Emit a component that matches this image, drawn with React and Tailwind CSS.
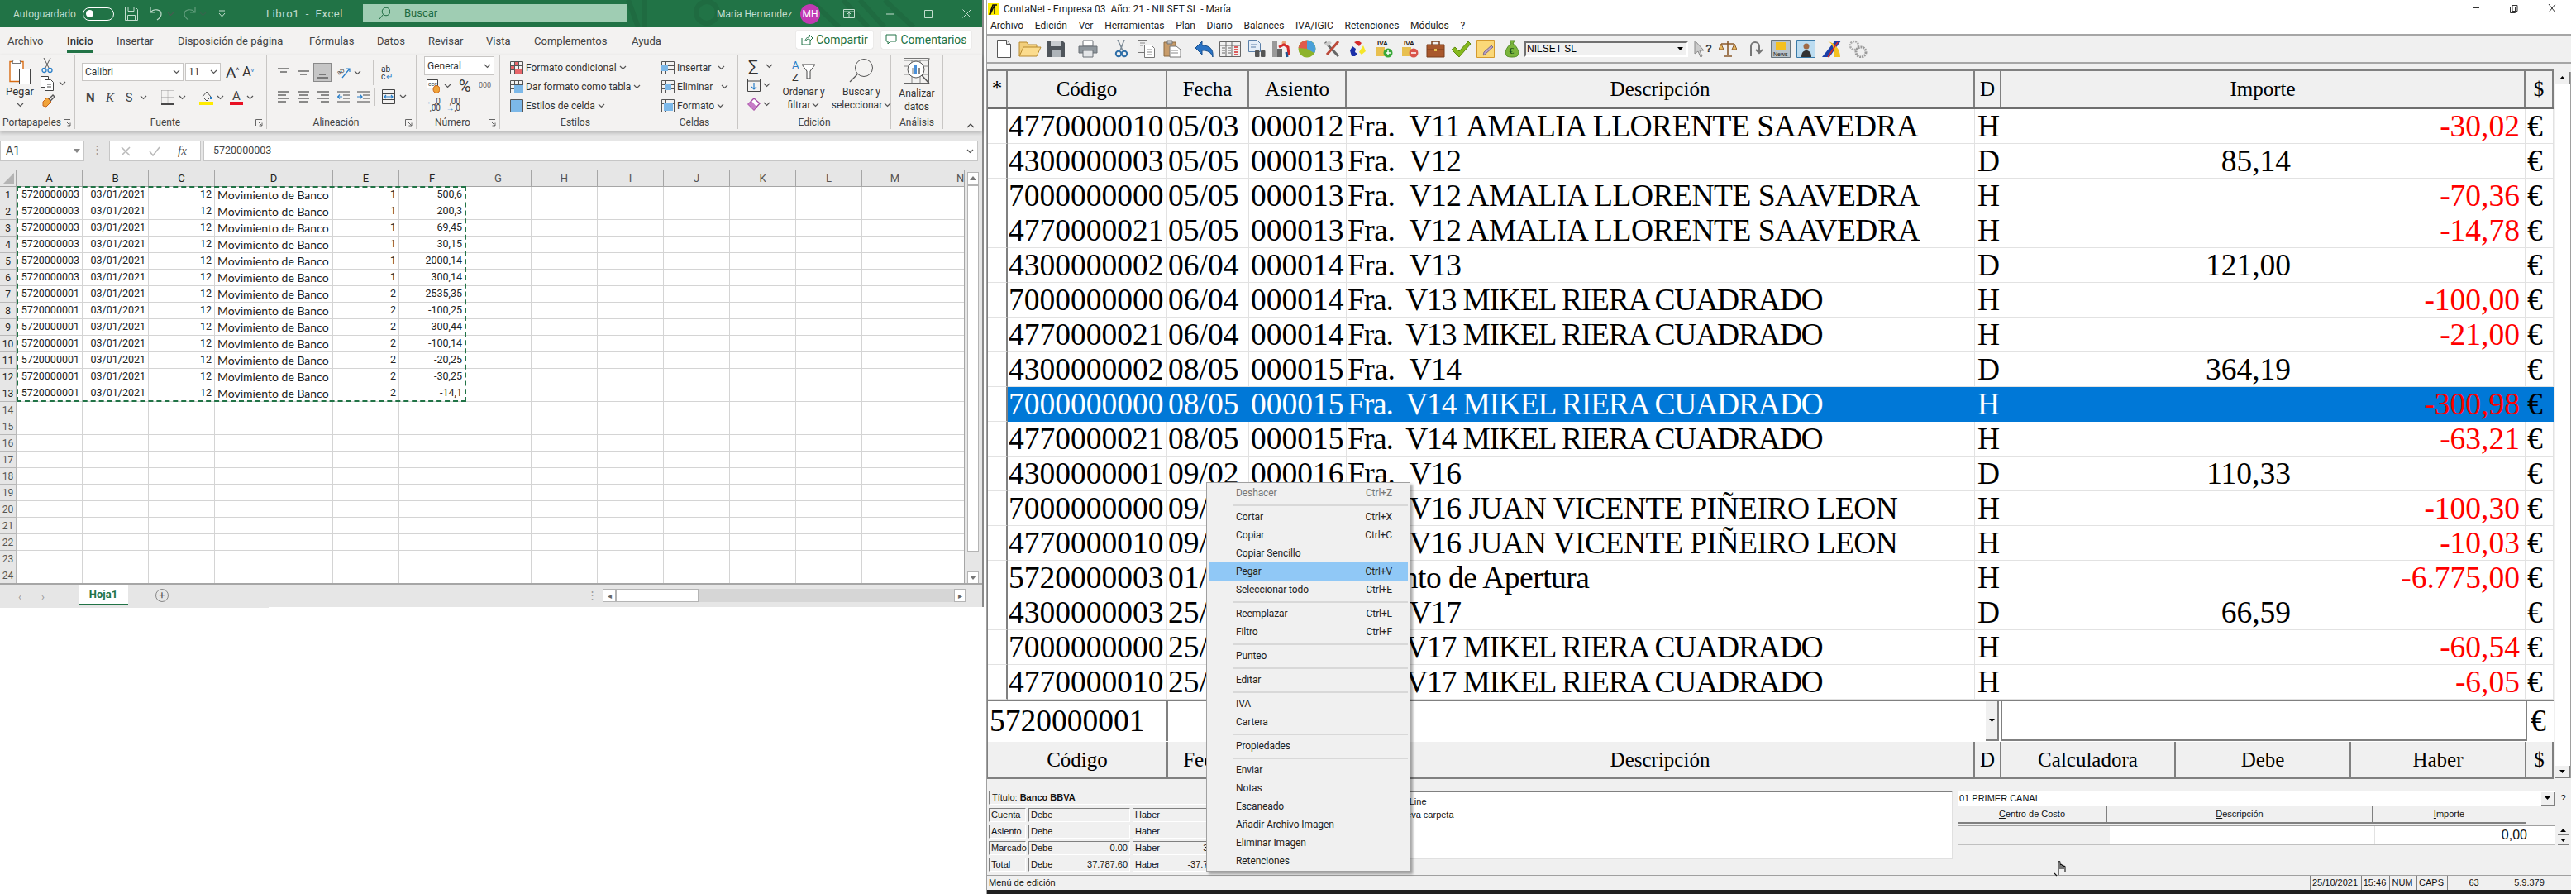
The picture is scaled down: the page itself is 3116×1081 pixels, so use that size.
// App.jsx
import React from "react";

const rows = [
  ["4770000010", "05/03", "000012", "Fra.  V11 AMALIA LLORENTE SAAVEDRA", "H", "-30,02"],
  ["4300000003", "05/05", "000013", "Fra.  V12", "D", "85,14"],
  ["7000000000", "05/05", "000013", "Fra.  V12 AMALIA LLORENTE SAAVEDRA", "H", "-70,36"],
  ["4770000021", "05/05", "000013", "Fra.  V12 AMALIA LLORENTE SAAVEDRA", "H", "-14,78"],
  ["4300000002", "06/04", "000014", "Fra.  V13", "D", "121,00"],
  ["7000000000", "06/04", "000014", "Fra.  V13 MIKEL RIERA CUADRADO", "H", "-100,00"],
  ["4770000021", "06/04", "000014", "Fra.  V13 MIKEL RIERA CUADRADO", "H", "-21,00"],
  ["4300000002", "08/05", "000015", "Fra.  V14", "D", "364,19"],
  ["7000000000", "08/05", "000015", "Fra.  V14 MIKEL RIERA CUADRADO", "H", "-300,98", true],
  ["4770000021", "08/05", "000015", "Fra.  V14 MIKEL RIERA CUADRADO", "H", "-63,21"],
  ["4300000001", "09/02", "000016", "Fra.  V16", "D", "110,33"],
  ["7000000000", "09/02", "000016", "Fra.  V16 JUAN VICENTE PIÑEIRO LEON", "H", "-100,30"],
  ["4770000010", "09/02", "000016", "Fra.  V16 JUAN VICENTE PIÑEIRO LEON", "H", "-10,03"],
  ["5720000003", "01/01", "000001", "Asiento de Apertura", "H", "-6.775,00"],
  ["4300000003", "25/03", "000017", "Fra.  V17", "D", "66,59"],
  ["7000000000", "25/03", "000017", "Fra.  V17 MIKEL RIERA CUADRADO", "H", "-60,54"],
  ["4770000010", "25/03", "000017", "Fra.  V17 MIKEL RIERA CUADRADO", "H", "-6,05"],
];

const sheet = [
  ["5720000003", "500,6", 1],
  ["5720000003", "200,3", 1],
  ["5720000003", "69,45", 1],
  ["5720000003", "30,15", 1],
  ["5720000003", "2000,14", 1],
  ["5720000003", "300,14", 1],
  ["5720000001", "-2535,35", 2],
  ["5720000001", "-100,25", 2],
  ["5720000001", "-300,44", 2],
  ["5720000001", "-100,14", 2],
  ["5720000001", "-20,25", 2],
  ["5720000001", "-30,25", 2],
  ["5720000001", "-14,1", 2],
];

const menu = [
  ["Deshacer", "Ctrl+Z", "off"],
  "-",
  ["Cortar", "Ctrl+X"],
  ["Copiar", "Ctrl+C"],
  ["Copiar Sencillo"],
  ["Pegar", "Ctrl+V", "on"],
  ["Seleccionar todo", "Ctrl+E"],
  "-",
  ["Reemplazar", "Ctrl+L"],
  ["Filtro", "Ctrl+F"],
  "-",
  ["Punteo"],
  "-",
  ["Editar"],
  "-",
  ["IVA"],
  ["Cartera"],
  "-",
  ["Propiedades"],
  "-",
  ["Enviar"],
  ["Notas"],
  ["Escaneado"],
  ["Añadir Archivo Imagen"],
  ["Eliminar Imagen"],
  ["Retenciones"],
];

const Ico = ({ w, h = 22, className = "", children }) => (
  <svg width={w} height={h} viewBox={`0 0 ${w} ${h}`} className={"shrink-0 " + className} fill="none">
    {children}
  </svg>
);

const Chev = ({ className = "" }) => (
  <svg width="9" height="6" viewBox="0 0 9 6" className={"shrink-0 " + className} fill="none">
    <path d="M1 1l3.5 3.5L8 1" stroke="#555" strokeWidth="1.2" />
  </svg>
);

const Launcher = () => (
  <svg width="9" height="9" viewBox="0 0 9 9" fill="none" className="shrink-0">
    <path d="M.5 8V.5H8M3 3l5 5M8 4.5V8H4.5" stroke="#666" />
  </svg>
);

const LinesIcon = ({ ys, xs, className = "" }) => (
  <Ico w={16} h={16} className={className}>
    {ys.map((y, i) => (
      <path key={i} d={`M${xs[i][0]} ${y}H${xs[i][1]}`} stroke="#444" strokeWidth="1.2" />
    ))}
  </Ico>
);

const GridIcon = ({ children, className = "" }) => (
  <Ico w={16} h={16} className={className}>
    <path d="M.5.5h15v15H.5zM.5 5.5h15M.5 10.5h15M5.5.5v15M10.5.5v15" stroke="#555" />
    {children}
  </Ico>
);

function Group({ w, label, launcher, children }) {
  return (
    <div className={`${w} shrink-0 h-[89px] mt-px border-r border-[#c8c6c4] flex flex-col`}>
      <div className="h-[76px] relative">{children}</div>
      <div className="h-[16px] flex items-center text-[12px] text-[#444]">
        <span className="flex-1 text-center whitespace-nowrap">{label}</span>
        {launcher && (
          <span className="mr-[4px]">
            <Launcher />
          </span>
        )}
      </div>
    </div>
  );
}

function Ribbon() {
  return (
    <div className="flex h-[93px] bg-[#f3f2f1] text-[12px] text-[#333] shadow-[0_2px_4px_rgba(0,0,0,0.2)] relative font-[Roboto,sans-serif]">
      <Group w="w-[91px]" label="Portapapeles" launcher>
        <div className="flex">
          <div className="w-[48px] flex flex-col items-center pt-[3px]">
            <Ico w={28} h={32}>
              <path d="M2 4.5h16v24H2z" fill="#fff" stroke="#d86b12" strokeWidth="1.4" />
              <path d="M6 2.5h8l1 4H5z" fill="#fff" stroke="#777" />
              <path d="M13.5 13.5h13v18h-13z" fill="#fff" stroke="#444" />
            </Ico>
            <span className="mt-[1px] leading-[16px] text-[13px]">Pegar</span>
            <Chev className="mt-[5px]" />
          </div>
          <div className="flex flex-col items-start pl-[1px] pt-[2px] gap-[3px]">
            <Ico w={16} h={20}>
              <path d="M4 1l6 12M12 1L6 13" stroke="#555" />
              <circle cx="4.5" cy="16" r="2.5" stroke="#2a7fc9" strokeWidth="1.3" />
              <circle cx="11.5" cy="16" r="2.5" stroke="#2a7fc9" strokeWidth="1.3" />
            </Ico>
            <div className="flex items-center">
              <Ico w={17} h={18}>
                <path d="M.5.5h9v13h-9z" fill="#fff" stroke="#444" />
                <path d="M5.5 4.5h7l3 3v10h-10zM8 10h5M8 13h5" fill="#fff" stroke="#444" />
              </Ico>
              <Chev className="ml-[5px]" />
            </div>
            <Ico w={18} h={18}>
              <path d="M3 10l5-5 5 5-6 6-4-1z" fill="#f0a33a" stroke="#c8641a" />
              <path d="M10 7l5-5 2 2-5 5" stroke="#555" strokeWidth="1.4" />
            </Ico>
          </div>
        </div>
      </Group>
      <Group w="w-[232px]" label="Fuente" launcher>
        <div className="flex items-center pt-[9px] pl-[8px]">
          <div className="w-[123px] h-[22px] bg-white border border-[#c8c6c4] flex items-center pl-[3px] justify-between pr-[3px]">
            Calibri
            <Chev />
          </div>
          <div className="w-[43px] ml-[2px] h-[22px] bg-white border border-[#c8c6c4] flex items-center pl-[3px] justify-between pr-[3px]">
            11
            <Chev />
          </div>
          <span className="ml-[6px] text-[19px] leading-none">A</span>
          <span className="text-[9px] self-start mt-[3px]">^</span>
          <span className="ml-[4px] text-[16px] leading-none">A</span>
          <span className="text-[8px] self-start mt-[3px] text-[#2a7fc9]">v</span>
        </div>
        <div className="flex items-center mt-[9px] pl-[13px] h-[22px] text-[#444]">
          <span className="w-[14px] font-bold text-[15px]">N</span>
          <span className="ml-[10px] w-[14px] italic text-[15px] font-['Liberation_Serif',serif]">K</span>
          <span className="ml-[10px] underline text-[14px] w-[12px]">S</span>
          <Chev className="ml-[5px]" />
          <span className="ml-[9px] h-[22px] border-l border-[#c8c6c4]" />
          <Ico w={16} h={18} className="ml-[7px]">
            <path d="M.5 .5h15M.5 8.5h15M8 .5v16M.5.5v16M15.5.5v16" stroke="#999" strokeDasharray="1 1" />
            <path d="M0 17h16" stroke="#111" strokeWidth="1.5" />
          </Ico>
          <Chev className="ml-[5px]" />
          <span className="ml-[8px] h-[22px] border-l border-[#c8c6c4]" />
          <Ico w={17} h={18} className="ml-[7px]">
            <path d="M4 8l5-6 5 6-5 5z" stroke="#555" />
            <path d="M14 8v3" stroke="#2a7fc9" strokeWidth="2" />
            <path d="M0 14h17v4H0z" fill="#ffeb00" />
          </Ico>
          <Chev className="ml-[4px]" />
          <div className="ml-[7px] w-[16px] flex flex-col items-center">
            <span className="text-[15px] leading-[14px]">A</span>
            <span className="w-[16px] h-[4px] bg-[#e81123]" />
          </div>
          <Chev className="ml-[4px]" />
        </div>
      </Group>
      <Group w="w-[181px]" label="Alineación" launcher>
        <div className="flex items-center pt-[9px] pl-[12px] h-[32px]">
          <LinesIcon ys={[3, 7]} xs={[[1, 15], [4, 12]]} />
          <LinesIcon ys={[6, 10]} xs={[[1, 15], [4, 12]]} className="ml-[8px]" />
          <div className="w-[22px] h-[23px] ml-[4px] bg-[#c6c6c6] border border-[#8a8a8a] flex items-center justify-center">
            <LinesIcon ys={[10, 14]} xs={[[4, 12], [1, 15]]} />
          </div>
          <Ico w={18} h={18} className="ml-[6px] overflow-visible">
            <text x="2" y="10" fontSize="8" fill="#444" transform="rotate(-30 6 10)">ab</text>
            <path d="M7 15L16 4M12 4h4v4" stroke="#2a7fc9" strokeWidth="1.2" />
          </Ico>
          <Chev className="ml-[3px]" />
          <span className="ml-[14px] h-[30px] border-l border-[#c8c6c4]" />
          <div className="ml-[9px] flex flex-col items-start text-[10px] leading-[9px] text-[#333]">
            <span>ab</span>
            <span className="flex items-center">
              c<span className="text-[#2a7fc9] ml-px">↵</span>
            </span>
          </div>
        </div>
        <div className="flex items-center mt-[7px] pl-[12px] h-[22px]">
          <LinesIcon ys={[2, 6, 10, 14]} xs={[[1, 15], [1, 11], [1, 15], [1, 11]]} />
          <LinesIcon ys={[2, 6, 10, 14]} xs={[[1, 15], [3, 13], [1, 15], [3, 13]]} className="ml-[8px]" />
          <LinesIcon ys={[2, 6, 10, 14]} xs={[[1, 15], [5, 15], [1, 15], [5, 15]]} className="ml-[8px]" />
          <Ico w={15} h={16} className="ml-[9px]">
            <path d="M0 2h15M7 6h8M7 10h8M0 14h15" stroke="#444" />
            <path d="M6 8H0M3 5.5L.5 8 3 10.5" stroke="#2a7fc9" strokeWidth="1.2" />
          </Ico>
          <Ico w={15} h={16} className="ml-[9px]">
            <path d="M0 2h15M7 6h8M7 10h8M0 14h15" stroke="#444" />
            <path d="M0 8h6M3.5 5.5L6 8 3.5 10.5" stroke="#2a7fc9" strokeWidth="1.2" />
          </Ico>
          <span className="ml-[6px] h-[22px] border-l border-[#c8c6c4]" />
          <Ico w={16} h={18} className="ml-[8px]">
            <path d="M.5.5h15v17H.5zM.5 5.5h15M.5 12.5h15" stroke="#444" />
            <path d="M3 9h10M5 7L3 9l2 2M11 7l2 2-2 2" stroke="#2a7fc9" strokeWidth="1.2" />
          </Ico>
          <Chev className="ml-[5px]" />
        </div>
      </Group>
      <Group w="w-[101px]" label="Número" launcher>
        <div className="ml-[9px] mt-px w-[85px] h-[23px] bg-white border border-[#c8c6c4] flex items-center justify-between px-[3px]">
          General
          <Chev />
        </div>
        <div className="flex items-center h-[24px] pl-[12px] mt-[1px]">
          <Ico w={16} h={18}>
            <path d="M.5 1.5h13v10H.5z" fill="#fff" stroke="#444" />
            <text x="2" y="9" fontSize="7" fill="#333">ccc</text>
            <ellipse cx="12" cy="13" rx="4" ry="4.5" fill="#f0a33a" stroke="#c8641a" />
          </Ico>
          <Chev className="ml-[5px]" />
          <span className="ml-[9px] text-[20px] leading-none w-[19px]">%</span>
          <span className="ml-[5px] text-[9px] text-[#666]">000</span>
        </div>
        <div className="flex items-center h-[21px] pl-[12px] text-[10px] leading-[8px]">
          <div className="w-[17px] flex flex-col items-end text-[#444]">
            <span>
              <span className="text-[#2a7fc9]">←</span>,0
            </span>
            <span>,00</span>
          </div>
          <div className="ml-[7px] w-[17px] flex flex-col items-end text-[#444]">
            <span>,00</span>
            <span>
              <span className="text-[#2a7fc9]">→</span>,0
            </span>
          </div>
        </div>
      </Group>
      <Group w="w-[183px]" label="Estilos">
        <div className="flex flex-col pl-[12px] pt-[3px]">
          {[
            ["Formato condicional", <path key="a" d="M1 6h4v4H1zM6 1h4v4H6zM6 10h8v5H6z" fill="#e8666a" />],
            ["Dar formato como tabla", <path key="b" d="M5 6h11v10H5z" fill="#7cb8e8" />],
            ["Estilos de celda", <path key="c" d="M1 1h14v14H1z" fill="#7cb8e8" />],
          ].map(([t, fill]) => (
            <div key={t} className="h-[23px] flex items-center whitespace-nowrap">
              <GridIcon>{fill}</GridIcon>
              <span className="ml-[3px]">{t}</span>
              <Chev className="ml-[3px]" />
            </div>
          ))}
        </div>
      </Group>
      <Group w="w-[105px]" label="Celdas">
        <div className="flex flex-col pl-[12px] pt-[3px]">
          {[
            ["Insertar", "M0 4h8v8H0z", "ml-[8px]"],
            ["Eliminar", "M4 4h8v8H4z", "ml-[12px]"],
            ["Formato", "M3 4h11v10H3z", "ml-[7px]"],
          ].map(([t, d, gap]) => (
            <div key={t} className="h-[23px] flex items-center whitespace-nowrap">
              <GridIcon>
                <path d={d} fill="#7cb8e8" />
              </GridIcon>
              <span className="ml-[3px] w-[41px]">{t}</span>
              <Chev className={gap} />
            </div>
          ))}
        </div>
      </Group>
      <Group w="w-[185px]" label="Edición">
        <div className="flex pl-[11px]">
          <div className="flex flex-col pt-[1px] w-[45px]">
            <div className="h-[23px] flex items-center">
              <span className="text-[20px] leading-none w-[17px] ml-[1px]">∑</span>
              <Chev className="ml-[4px]" />
            </div>
            <div className="h-[23px] flex items-center">
              <Ico w={16} h={16}>
                <path d="M.5.5h15v15H.5zM.5 3h15" stroke="#444" />
                <path d="M8 5v8M5 10l3 3 3-3" stroke="#2a7fc9" strokeWidth="1.2" />
              </Ico>
              <Chev className="ml-[3px]" />
            </div>
            <div className="h-[23px] flex items-center">
              <Ico w={16} h={16}>
                <path d="M1 8l7-7 7 6-7 8z" fill="#fff" stroke="#a64ca6" strokeWidth="1.4" />
                <path d="M1 8l4-4 6 7-3 4z" fill="#c77cc7" />
              </Ico>
              <Chev className="ml-[3px]" />
            </div>
          </div>
          <div className="w-[75px] flex flex-col items-center pt-[5px] ml-[-9px]">
            <Ico w={30} h={28}>
              <text x="1" y="11" fontSize="13" fill="#2a7fc9">A</text>
              <text x="1" y="26" fontSize="13" fill="#333">Z</text>
              <path d="M13 6h16l-6 8v9h-4v-9z" fill="#fff" stroke="#444" />
            </Ico>
            <span className="leading-[16px] mt-[3px]">Ordenar y</span>
            <span className="leading-[16px] flex items-center">
              filtrar
              <Chev className="ml-[2px]" />
            </span>
          </div>
          <div className="w-[70px] flex flex-col items-center pt-[3px]">
            <Ico w={30} h={30}>
              <circle cx="18" cy="12" r="10.5" stroke="#555" />
              <path d="M10 20L1 29" stroke="#555" strokeWidth="1.3" />
            </Ico>
            <span className="leading-[16px] mt-[3px]">Buscar y</span>
            <span className="leading-[16px] flex items-center whitespace-nowrap">
              seleccionar
              <Chev className="ml-[2px]" />
            </span>
          </div>
        </div>
      </Group>
      <Group w="w-[63px]" label="Análisis">
        <div className="flex flex-col items-center pt-[3px]">
          <Ico w={33} h={32}>
            <path d="M.5.5h30v30H.5z" fill="#f3f2f1" stroke="#666" />
            <path d="M0 0h31v3H0zM.5 10h30M.5 20h30M10 3v27M20 3v27" stroke="#888" />
            <circle cx="15" cy="14" r="10" fill="#fff" stroke="#555" />
            <path d="M10 12h3v7h-3z" fill="#bbb" />
            <path d="M13 9h3v10h-3z" fill="#4a90d9" />
            <path d="M17 12h3v7h-3z" fill="#888" />
            <path d="M22 21l9 10" stroke="#555" strokeWidth="1.5" />
          </Ico>
          <span className="leading-[16px] mt-[3px]">Analizar</span>
          <span className="leading-[16px]">datos</span>
        </div>
      </Group>
      <svg width="10" height="6" viewBox="0 0 10 6" fill="none" className="ml-auto mr-[9px] self-end mb-[4px]">
        <path d="M1 5l4-4 4 4" stroke="#444" strokeWidth="1.2" />
      </svg>
    </div>
  );
}

function Excel() {
  const tabs = [
    ["Archivo", "w-[72px]"],
    ["Inicio", "w-[60px]"],
    ["Insertar", "w-[74px]"],
    ["Disposición de página", "w-[159px]"],
    ["Fórmulas", "w-[82px]"],
    ["Datos", "w-[62px]"],
    ["Revisar", "w-[70px]"],
    ["Vista", "w-[58px]"],
    ["Complementos", "w-[118px]"],
    ["Ayuda", "w-[60px]"],
  ];
  const letters = "ABCDEFGHIJKLMN".split("");
  return (
    <div className="w-[1188px] shrink-0 h-[734px] flex flex-col bg-[#e6e6e6] font-[Roboto,sans-serif] relative">
      {/* barra de titulo */}
      <div className="h-[33px] bg-[#217346] flex items-center text-[12px] text-[#c3ddce] relative shrink-0">
        <svg width="458" height="33" viewBox="0 0 458 33" fill="none" className="absolute right-0 top-0">
          <path d="M30 0l12 33M50 0v33M250 0l35 33M290 0l30 33M310 0l30 33M340 0l35 33" stroke="#1f6b41" strokeWidth="6" />
          <circle cx="125" cy="15" r="13" stroke="#1f6b41" strokeWidth="6" />
        </svg>
        <span className="ml-[16px] w-[84px]">Autoguardado</span>
        <div className="w-[38px] h-[16px] rounded-full border border-white flex items-center pl-[3px]">
          <span className="w-[9px] h-[9px] rounded-full bg-white" />
        </div>
        <Ico w={16} h={17} className="ml-[13px]">
          <path d="M.5.5h12l3 3v13H.5zM4 .5v5h7v-5M3.5 16.5v-6h9v6" stroke="#c3ddce" />
        </Ico>
        <Ico w={15} h={17} className="ml-[14px]">
          <path d="M1 1v6h6M1 7c4-5 13-4 13 2 0 3-2 5-5 7" stroke="#c3ddce" strokeWidth="1.2" />
        </Ico>
        <Chev className="ml-[6px] opacity-70" />
        <Ico w={15} h={17} className="ml-[11px] opacity-40">
          <path d="M14 1v6H8M14 7C10 2 1 3 1 9c0 3 2 5 5 7" stroke="#c3ddce" strokeWidth="1.2" />
        </Ico>
        <Chev className="ml-[4px] opacity-40" />
        <Ico w={10} h={10} className="ml-[14px]">
          <path d="M1 1h7M1 4l3.5 4L8 4" stroke="#c3ddce" />
        </Ico>
        <span className="ml-[48px] w-[120px] whitespace-pre text-[13px] tracking-[0.6px]">Libro1  -  Excel</span>
        <div className="absolute left-[439px] top-[5px] w-[320px] h-[22px] bg-[#9fcdb3] flex items-center pl-[19px] text-[#1e6b41] text-[13px]">
          <Ico w={14} h={16}>
            <circle cx="9" cy="6" r="4.8" stroke="#1e6b41" />
            <path d="M5.5 9.5L1 15" stroke="#1e6b41" />
          </Ico>
          <span className="ml-[17px]">Buscar</span>
        </div>
        <div className="absolute left-[867px] top-0 h-[33px] flex items-center">
          <span className="w-[101px] whitespace-nowrap">Maria Hernandez</span>
          <span className="w-[24px] h-[24px] rounded-full bg-[#c239b3] text-white text-[12px] flex items-center justify-center">MH</span>
          <Ico w={14} h={12} className="ml-[28px]">
            <path d="M.5.5h13v10H.5zM.5 3h13M7 9V4.5M5 6l2-2 2 2" stroke="#c3ddce" />
          </Ico>
          <Ico w={10} h={2} className="ml-[38px]">
            <path d="M0 1h10" stroke="#c3ddce" />
          </Ico>
          <Ico w={10} h={10} className="ml-[36px]">
            <path d="M.5.5h9v9h-9z" stroke="#c3ddce" />
          </Ico>
          <Ico w={11} h={11} className="ml-[36px]">
            <path d="M.5.5l10 10M10.5.5l-10 10" stroke="#c3ddce" />
          </Ico>
        </div>
      </div>
      {/* pestañas */}
      <div className="h-[33px] bg-[#f3f2f1] flex items-center pl-[9px] text-[13px] text-[#444] relative shrink-0">
        {tabs.map(([t, w]) => (
          <span key={t} className={`${w} h-[33px] flex items-center shrink-0`}>
            <span className={t === "Inicio" ? "h-[28px] flex items-center pt-[3px] border-b-[3px] border-[#217346] font-medium text-[#333]" : ""}>{t}</span>
          </span>
        ))}
        <div className="absolute top-[4px] left-[963px] w-[93px] h-[22px] bg-white rounded-[2px] shadow-[0_0_1px_rgba(0,0,0,0.3)] flex items-center justify-center text-[14px] text-[#217346]">
          <Ico w={14} h={14} className="mr-[4px]">
            <path d="M1 5v8h10V9M5 9c0-4 3-5 5-5V1l4 4-4 4V6C8 6 6 7 5 9z" stroke="#217346" />
          </Ico>
          Compartir
        </div>
        <div className="absolute top-[4px] left-[1066px] w-[109px] h-[22px] bg-white rounded-[2px] shadow-[0_0_1px_rgba(0,0,0,0.3)] flex items-center justify-center text-[14px] text-[#217346]">
          <Ico w={14} h={14} className="mr-[4px]">
            <path d="M1 1h12v8H6l-3 3V9H1z" stroke="#217346" />
          </Ico>
          Comentarios
        </div>
      </div>
      <Ribbon />
      {/* barra de formulas */}
      <div className="h-[25px] mt-[11px] flex shrink-0 text-[12.5px] text-[#444]">
        <div className="w-[102px] bg-white border border-[#c6c6c6] flex items-center justify-between pl-[6px] pr-[4px] text-[14px]">
          A1
          <svg width="8" height="5" viewBox="0 0 8 5">
            <path d="M0 0h8L4 5z" fill="#888" />
          </svg>
        </div>
        <span className="w-[30px] text-center text-[#999] leading-[22px]">⋮</span>
        <div className="w-[111px] bg-white border border-[#c6c6c6] flex items-center text-[#b0b0b0]">
          <Ico w={12} h={12} className="ml-[13px]">
            <path d="M1 1l10 10M11 1L1 11" stroke="#bbb" strokeWidth="1.6" />
          </Ico>
          <Ico w={14} h={12} className="ml-[22px]">
            <path d="M1 6l4 5 8-10" stroke="#bbb" strokeWidth="1.6" />
          </Ico>
          <span className="ml-[21px] italic font-['Liberation_Serif',serif] text-[#555] text-[15px]">fx</span>
        </div>
        <div className="ml-[3px] flex-1 mr-[5px] bg-white border border-[#c6c6c6] flex items-center justify-between pl-[11px] pr-[4px]">
          5720000003
          <Chev />
        </div>
      </div>
      {/* hoja */}
      <div className="mt-[11px] flex h-[500px] shrink-0 font-[Roboto,sans-serif] text-[12.5px] text-[#222]">
        <div className="w-[1167px] overflow-hidden grid grid-cols-[20px_repeat(3,80px)_143px_repeat(9,80px)_44px] grid-rows-[20px_repeat(24,20px)] border-r border-[#a6a6a6]">
          <div className="bg-[#e6e6e6] border-r border-b border-[#a6a6a6] flex items-end justify-end">
            <svg width="14" height="14" viewBox="0 0 14 14" className="mb-[2px] mr-[2px]">
              <path d="M14 0v14H0z" fill="#b4b4b4" />
            </svg>
          </div>
          {letters.map((l, i) => (
            <div key={l} className={`bg-[#e6e6e6] border-r border-b border-[#a6a6a6] flex items-center overflow-hidden text-[13px] ${i === 13 ? "pl-[34px]" : "justify-center"} ${i > 5 ? "text-[#555]" : "text-[#222]"}`}>
              {l}
            </div>
          ))}
          {Array.from({ length: 24 }).map((_, r) => {
            const d = sheet[r];
            return (
              <React.Fragment key={r}>
                <div className={`bg-[#e6e6e6] border-r border-b border-[#b8b8b8] flex items-center justify-center text-[12px] ${d ? "text-[#222]" : "text-[#555]"}`}>{r + 1}</div>
                {letters.map((l, c) => {
                  let text = "";
                  if (d) text = [d[0], "03/01/2021", "12", "Movimiento de Banco", d[2], d[1]][c] ?? "";
                  return (
                    <div key={l} className={`bg-white border-r border-b border-[#d4d4d4] flex items-center whitespace-nowrap overflow-hidden ${c === 3 ? "pl-[3px] font-[Lato,sans-serif] text-[14px]" : "justify-end pr-[3px]"}`}>
                      {text}
                    </div>
                  );
                })}
              </React.Fragment>
            );
          })}
        </div>
        <div className="ml-[3px] w-[14px] h-[498px] mt-[2px] bg-[#e6e6e6] flex flex-col">
          <div className="h-[15px] bg-white border border-[#b4b4b4] flex items-center justify-center">
            <svg width="8" height="5" viewBox="0 0 8 5">
              <path d="M4 0l4 5H0z" fill="#777" />
            </svg>
          </div>
          <div className="h-[444px] bg-white border border-t-2 border-[#b4b4b4]" />
          <div className="flex-1" />
          <div className="h-[15px] bg-white border border-[#b4b4b4] flex items-center justify-center">
            <svg width="8" height="5" viewBox="0 0 8 5">
              <path d="M0 0h8L4 5z" fill="#777" />
            </svg>
          </div>
        </div>
      </div>
      <div className="absolute left-[20px] top-[225px] w-[544px] h-[261px] border-2 border-dashed border-[#217346]" />
      {/* pestañas de hoja */}
      <div className="h-[28px] border-t-2 border-[#a6a6a6] -mt-[1px] flex text-[#999] relative">
        <span className="ml-[22px] w-[6px] mt-[5px] text-[13px]">‹</span>
        <span className="ml-[22px] w-[6px] mt-[5px] text-[13px]">›</span>
        <div className="ml-[39px] w-[60px] h-[25px] bg-white border-b-2 border-[#217346] text-[#217346] text-[13px] font-bold flex items-center justify-center">Hoja1</div>
        <div className="ml-[33px] mt-[5px] w-[16px] h-[16px] rounded-full border border-[#888] text-[#555] text-[13px] leading-[13px] text-center">+</div>
        <span className="ml-[506px] w-[6px] mt-[3px] text-[#999] text-[13px]">⋮</span>
        <div className="ml-[13px] mt-[5px] w-[439px] h-[16px] bg-[#d6d6d6] flex items-stretch">
          <div className="w-[16px] bg-white border border-[#b4b4b4] text-[10px] text-[#666] flex items-center justify-center">◂</div>
          <div className="w-[100px] bg-white border border-[#b4b4b4]" />
          <div className="flex-1" />
          <div className="w-[14px] bg-white border border-[#b4b4b4] text-[10px] text-[#666] flex items-center justify-center">▸</div>
        </div>
      </div>
    </div>
  );
}

const Bevel = "bg-[#f0f0f0] border-r-2 border-b-0 border-[#808080] flex items-center justify-center";

function ToolbarIcons() {
  return (
    <>
      <Ico w={17} className="ml-[12px]">
        <path d="M.5.5h11l5 5v16H.5z" fill="#fff" stroke="#555" />
        <path d="M11.5.5v5h5" stroke="#555" fill="#ddd" />
      </Ico>
      <Ico w={28} className="ml-[9px]">
        <path d="M1 20V3h9l2 3h10v4" fill="#f2cf7c" stroke="#b88a2e" />
        <path d="M1 20l5-11h21l-5 11z" fill="#fbdc8e" stroke="#b88a2e" />
      </Ico>
      <Ico w={21} className="ml-[7px]">
        <path d="M0 1h18l3 3v17H0z" fill="#4f555b" />
        <path d="M4 1h12v7H4z" fill="#c8ccd0" />
        <path d="M5 13h11v8H5z" fill="#aeb4b9" />
      </Ico>
      <Ico w={24} className="ml-[16px]">
        <path d="M6 1h12v7H6z" fill="#fff" stroke="#6a7177" />
        <path d="M1 8h22v8H1z" fill="#8f979d" stroke="#6a7177" />
        <path d="M6 13h12v8H6z" fill="#e4e6e8" stroke="#6a7177" />
      </Ico>
      <Ico w={19} className="ml-[19px]">
        <path d="M5 0l6 13M13 0L8 13" stroke="#7b8a96" strokeWidth="1.5" />
        <circle cx="6" cy="17" r="3.2" stroke="#2f6fa8" strokeWidth="2" />
        <circle cx="13" cy="17" r="3.2" stroke="#2f6fa8" strokeWidth="2" />
      </Ico>
      <Ico w={22} className="ml-[10px]">
        <path d="M.5.5h11v15H.5z" fill="#eee" stroke="#777" />
        <path d="M8.5 6.5h8l4 4v11h-12z" fill="#fff" stroke="#777" />
        <path d="M3 4h6M3 7h4M11 12h7M11 15h7M11 18h7" stroke="#888" />
      </Ico>
      <Ico w={22} className="ml-[9px]">
        <path d="M1 3h14v17H1z" fill="#c89c6a" stroke="#8c6a40" />
        <path d="M5 1h6v4H5z" fill="#bbb" stroke="#777" />
        <path d="M8 8h8l5 4v9H8z" fill="#fff" stroke="#777" />
        <path d="M10 13h8M10 16h8" stroke="#888" />
      </Ico>
      <Ico w={24} className="ml-[16px]">
        <path d="M1 10l8-8v5c9 0 14 4 13 14-2-6-6-8-13-8v5z" fill="#2a73c4" stroke="#1a518f" />
      </Ico>
      <Ico w={26} className="ml-[6px]">
        <path d="M.5 2.5h25v18H.5zM.5 7h25M8 2.5v18M15 2.5v18M3 10h4M3 13h4M3 16h4M10 10h4M10 13h4M10 16h4" stroke="#666" />
        <path d="M18 9h5M18 12h5M18 15h5M18 18h5" stroke="#d42a2a" strokeWidth="1.5" />
      </Ico>
      <Ico w={21} className="ml-[9px]">
        <path d="M.5.5h10l4 4v10H.5z" fill="#e5eef8" stroke="#5a7fa8" />
        <path d="M3 6h8M3 9h6" stroke="#5a7fa8" />
        <rect x="8" y="13" width="5.5" height="8" rx="1" fill="#555" />
        <rect x="15" y="13" width="5.5" height="8" rx="1" fill="#555" />
      </Ico>
      <Ico w={22} className="ml-[8px]">
        <path d="M0 2h6v19H0z" fill="#999" />
        <path d="M6 11h6v10H6z" fill="#666" />
        <circle cx="14" cy="4" r="2.5" fill="#e8a47a" />
        <path d="M8 9l6-3 5 3 1 10" stroke="#d42a2a" strokeWidth="3" />
        <path d="M17 15l1 6" stroke="#1a518f" strokeWidth="3" />
      </Ico>
      <Ico w={22} className="ml-[9px]">
        <circle cx="11" cy="11" r="10.5" fill="#8db32a" />
        <path d="M11 11V.5A10.5 10.5 0 0 0 .6 10z" fill="#e05a4a" />
        <path d="M11 11V.5a10.5 10.5 0 0 1 9 15.7z" fill="#4aa0d9" />
      </Ico>
      <Ico w={24} className="ml-[8px]">
        <path d="M3 3l16 17" stroke="#666" strokeWidth="3" />
        <path d="M19 2L5 18" stroke="#bb4a3a" strokeWidth="3" />
        <path d="M2 5l6-4 3 3-5 4z" fill="#ccc" />
      </Ico>
      <Ico w={21} className="ml-[8px]">
        <path d="M6 3l5-2 4 3-3 4z" fill="#d42a2a" />
        <path d="M17 7l3 7-5 4-3-3z" fill="#f5e62a" />
        <path d="M1 13l3-5 4 3-1 4 3 2-3 3H3z" fill="#1a2fa8" />
      </Ico>
      <Ico w={23} className="ml-[10px]">
        <text x="3" y="7" fontSize="8" fontWeight="700" fill="#222" fontFamily="Liberation Sans">IVA</text>
        <path d="M1 9h11v11H1z" fill="#e8c050" />
        <circle cx="16" cy="16" r="5.5" fill="#3aa83a" />
        <path d="M13 16h6M16 13v6" stroke="#fff" strokeWidth="1.5" />
      </Ico>
      <Ico w={22} className="ml-[9px]">
        <text x="3" y="7" fontSize="8" fontWeight="700" fill="#222" fontFamily="Liberation Sans">IVA</text>
        <path d="M1 9h11v11H1z" fill="#e8c050" />
        <circle cx="15" cy="16" r="5.5" fill="#d9534a" />
        <path d="M12 16h6" stroke="#fff" strokeWidth="1.5" />
      </Ico>
      <Ico w={23} className="ml-[8px]">
        <path d="M7 6V2h9v4" stroke="#7a3f1c" strokeWidth="1.5" />
        <path d="M1 6h21v15H1z" fill="#a8572c" stroke="#7a3f1c" />
        <path d="M1 12h21" stroke="#7a3f1c" />
        <path d="M10 11h3v3h-3z" fill="#e8c050" />
      </Ico>
      <Ico w={26} className="ml-[6px]">
        <path d="M2 12l4-3 5 5L22 2l3 3-14 16z" fill="#85b81e" stroke="#5f8a10" />
      </Ico>
      <Ico w={22} className="ml-[6px]">
        <path d="M.5.5h21v21H.5z" fill="#fbd878" stroke="#d49a2e" />
        <path d="M8 19l1-4 9-8 2 2-9 8z" fill="#b9a0c9" stroke="#7b6c88" />
      </Ico>
      <Ico w={16} className="ml-[13px]">
        <path d="M5 1h6L9 5c4 2 7 8 7 11 0 4-3 5-8 5s-8-1-8-5c0-3 3-9 7-11z" fill="#7bb53c" stroke="#4f8a22" />
        <text x="4.5" y="17" fontSize="11" fontWeight="700" fill="#1e4d14" fontFamily="Liberation Serif">€</text>
      </Ico>
      <div className="ml-[7px] w-[198px] h-[19px] bg-[#f0f0f0] border-2 border-t-[#707070] border-l-[#707070] border-b-white border-r-white flex items-center justify-between text-[12px] font-[Liberation_Sans,sans-serif] pl-[1px] shrink-0">
        NILSET SL
        <span className="w-[14px] h-[15px] bg-[#f0f0f0] border-r border-b border-[#707070] flex items-center justify-center">
          <svg width="7" height="4" viewBox="0 0 7 4">
            <path d="M0 0h7L3.5 4z" fill="#000" />
          </svg>
        </span>
      </div>
      <Ico w={22} className="ml-[7px]">
        <path d="M1 1l11 12H7l3 7-2 1-3-7-4 3z" fill="#ccc" stroke="#888" />
        <text x="14" y="15" fontSize="13" fontWeight="700" fill="#333" fontFamily="Liberation Sans">?</text>
      </Ico>
      <Ico w={22} className="ml-[8px]">
        <path d="M11 1v18M3 5h16M6 20h10" stroke="#8a5a2b" strokeWidth="1.6" />
        <path d="M3 5l-3 7h6zM19 5l-3 7h6z" fill="#e8b860" stroke="#8a5a2b" />
      </Ico>
      <Ico w={22} className="ml-[10px]">
        <path d="M7 20V8a5 5 0 0 1 10 0v7M13 12l4 4 4-4" stroke="#777" strokeWidth="2" />
      </Ico>
      <Ico w={24} className="ml-[9px]">
        <path d="M.5.5h23v21H.5z" fill="#b9c4cc" stroke="#66737c" />
        <path d="M6 3h12v10H6z" fill="#f4c020" />
        <text x="3" y="20" fontSize="7" fill="#222" fontFamily="Liberation Sans">News</text>
      </Ico>
      <Ico w={23} className="ml-[7px]">
        <path d="M.5.5h22v21H.5z" fill="#bcdcf0" stroke="#3a7aa8" />
        <circle cx="12" cy="8" r="3.5" fill="#a06a45" />
        <path d="M6 21c0-6 3-8 6-8s6 2 6 8z" fill="#333" />
      </Ico>
      <Ico w={26} className="ml-[7px]">
        <path d="M1 21L17 1h7L10 21z" fill="#1a3fa8" />
        <path d="M8 2c6 2 8 10 8 19h7c0-9-6-17-15-19z" fill="#f4c020" />
        <path d="M8 21L20 3" stroke="#d42a2a" strokeWidth="1.5" />
      </Ico>
      <Ico w={24} className="ml-[6px]">
        <circle cx="8" cy="7" r="5" stroke="#aaa" strokeWidth="2.5" strokeDasharray="2 1" />
        <circle cx="16" cy="15" r="6" stroke="#999" strokeWidth="3" strokeDasharray="2 1" />
      </Ico>
    </>
  );
}

function ContaNet() {
  const cols = "grid grid-cols-[24px_193px_99px_118px_760px_32px_634px_34px]";
  return (
    <div className="ml-[3px] w-[1917px] shrink-0 h-[1081px] flex flex-col bg-[#f0f0f0] border-l border-[#a0a0a0] font-['Liberation_Serif',serif] text-black">
      <div className="h-[21px] bg-white flex items-center font-[Roboto,sans-serif] text-[12px] text-[#222] relative">
        <Ico w={13} h={14} className="ml-[1px]">
          <path d="M0 0h13v14H0z" fill="#ffee00" />
          <path d="M2 13L6 2h2L3 13zM8 13V2h3" stroke="#111" strokeWidth="1.4" />
        </Ico>
        <span className="ml-[6px] whitespace-pre">ContaNet - Empresa 03  Año: 21 - NILSET SL - María</span>
        <span className="absolute left-[1797px] top-[9px] w-[8px] h-px bg-[#333]" />
        <Ico w={10} h={12} className="absolute left-[1842px] top-[4px]">
          <path d="M3 2.5h6v7H3zM.5 4.5h6v7h-6z" fill="#fff" stroke="#333" />
        </Ico>
        <Ico w={10} h={12} className="absolute left-[1888px] top-[4px]">
          <path d="M1 1l8 10M9 1L1 11" stroke="#333" />
        </Ico>
      </div>
      <div className="h-[20px] bg-white flex items-center gap-[13.7px] pl-[4px] font-[Roboto,sans-serif] text-[12px] text-[#222]">
        {["Archivo", "Edición", "Ver", "Herramientas", "Plan", "Diario", "Balances", "IVA/IGIC", "Retenciones", "Módulos", "?"].map((m) => (
          <span key={m}>{m}</span>
        ))}
      </div>
      <div className="h-[36px] border-y-2 border-[#a6a6a6] flex items-center shrink-0">
        <ToolbarIcons />
      </div>
      {/* asientos */}
      <div className="mt-[7px] flex h-[858px] shrink-0">
        <div className="w-[1895px] border-l border-t-2 border-[#808080] bg-white">
          <div className={`${cols} h-[46px] border-b-[3px] border-[#6e6e6e] text-[25px] leading-none`}>
            <div className={`${Bevel} items-start pt-[8px]`}>*</div>
            <div className={Bevel}>Código</div>
            <div className={Bevel}>Fecha</div>
            <div className={Bevel}>Asiento</div>
            <div className={Bevel}>Descripción</div>
            <div className={Bevel}>D</div>
            <div className={Bevel}>Importe</div>
            <div className={Bevel}>$</div>
          </div>
          <div className="text-[37.5px] leading-none border-b-2 border-[#808080]">
            {rows.map((r, i) => {
              const sel = r[6];
              const cell = "h-[42px] flex items-center border-r border-b whitespace-pre overflow-hidden " + (sel ? "bg-[#0078d7] border-[#0078d7] " : "border-[#e2e2e2] ");
              const ink = sel ? "text-white " : "";
              const track = r[3].includes("MIKEL") ? "tracking-[-1.2px]" : "tracking-[-0.5px]";
              return (
                <div key={i} className={cols}>
                  <div className="h-[42px] border-r-2 border-b border-r-[#808080] border-b-[#e2e2e2] bg-white" />
                  <div className={cell + ink + "pl-px"}>{r[0]}</div>
                  <div className={cell + ink + "pl-px"}>{r[1]}</div>
                  <div className={cell + ink + "pl-[2px]"}>{r[2]}</div>
                  <div className={cell + ink + "pl-px " + track}>{r[3]}</div>
                  <div className={cell + ink + "pl-[3px]"}>{r[4]}</div>
                  <div className={cell + (r[4] === "H" ? "justify-end pr-[6px] text-[#ff0000]" : "justify-end pr-[283px]")}>{r[5]}</div>
                  <div className={cell + "pl-[2px] text-black"}>€</div>
                </div>
              );
            })}
          </div>
          <div className="flex h-[49px] text-[37.5px] leading-none border-b border-white">
            <div className="w-[218px] border-r-2 border-[#808080] flex items-center pl-[2px]">5720000001</div>
            <div className="w-[989px] flex-none" />
            <div className="w-[16px] bg-[#f0f0f0] border-r-2 border-b-2 border-[#808080] flex items-center justify-center">
              <svg width="7" height="4" viewBox="0 0 7 4">
                <path d="M0 0h7L3.5 4z" fill="#000" />
              </svg>
            </div>
            <div className="ml-[2px] w-[636px] border-l-2 border-b-2 border-[#808080]" />
            <div className="flex-1 flex items-center pl-[4px] border-l border-[#808080]">€</div>
          </div>
          <div className="grid grid-cols-[218px_98px_118px_760px_32px_211px_212px_212px_33px] h-[45px] text-[25px] leading-none border-b-2 border-[#808080]">
            {["Código", "Fecha", "Asiento", "Descripción", "D", "Calculadora", "Debe", "Haber", "$"].map((h) => (
              <div key={h} className={Bevel}>
                {h}
              </div>
            ))}
          </div>
        </div>
        <div className="w-[20px] ml-[1px] mt-[3px] h-[854px] bg-white border-x border-[#a0a0a0] flex flex-col justify-between">
          <div className="h-[15px] bg-[#f0f0f0] border-r border-b border-[#808080] flex items-center justify-center">
            <svg width="7" height="4" viewBox="0 0 7 4">
              <path d="M3.5 0L7 4H0z" fill="#000" />
            </svg>
          </div>
          <div className="h-[15px] bg-[#f0f0f0] border-r border-b border-[#808080] flex items-center justify-center">
            <svg width="7" height="4" viewBox="0 0 7 4">
              <path d="M0 0h7L3.5 4z" fill="#000" />
            </svg>
          </div>
        </div>
      </div>
      {/* panel inferior */}
      <div className="h-[116px] flex pl-[2px] pt-[14px] font-['Liberation_Sans',sans-serif] text-[11px] leading-none text-[#111] relative">
        <div className="w-[299px] flex flex-col gap-[3px]">
          <div className="h-[17px] border border-t-[#808080] border-l-[#808080] border-b-white border-r-white flex items-center pl-[3px] mb-[1px]">
            Título:&nbsp;<b>Banco BBVA</b>
          </div>
          {[
            ["Cuenta", "", ""],
            ["Asiento", "", ""],
            ["Marcado", "0.00", "-300.98"],
            ["Total", "37.787.60", "-37.787.60"],
          ].map(([t, d, h]) => (
            <div key={t} className="flex h-[17px] gap-[3px]">
              <div className="w-[45px] border border-t-[#808080] border-l-[#808080] border-b-white border-r-white flex items-center pl-[2px]">{t}</div>
              <div className="w-[123px] border border-t-[#808080] border-l-[#808080] border-b-white border-r-white flex items-center justify-between px-[2px]">
                <span>Debe</span>
                <span>{d}</span>
              </div>
              <div className="w-[122px] border border-t-[#808080] border-l-[#808080] border-b-white border-r-white flex items-center justify-between px-[2px]">
                <span>Haber</span>
                <span>{h}</span>
              </div>
            </div>
          ))}
        </div>
        <div className="ml-[5px] w-[862px] h-[83px] bg-white border border-t-2 border-t-[#808080] border-l-[#808080] border-b-[#e0e0e0] border-r-[#e0e0e0] pl-[186px] pt-[3px] leading-[16px]">
          <div>On Line</div>
          <div>Nueva carpeta</div>
        </div>
        <div className="ml-[6px] w-[740px] flex flex-col">
          <div className="flex h-[19px] gap-[3px]">
            <div className="w-[723px] bg-white border border-t-[#808080] border-l-[#808080] border-b-[#e0e0e0] border-r-[#e0e0e0] flex items-center justify-between pl-px">
              01 PRIMER CANAL
              <span className="w-[16px] h-[16px] bg-[#f0f0f0] border-r border-b border-[#808080] flex items-center justify-center">
                <svg width="7" height="4" viewBox="0 0 7 4">
                  <path d="M0 0h7L3.5 4z" fill="#000" />
                </svg>
              </span>
            </div>
            <div className="w-[14px] bg-[#f0f0f0] border-r border-b border-[#808080] flex items-center justify-center">?</div>
          </div>
          <div className="flex h-[21px] w-[688px] border-b-2 border-[#808080]">
            <div className="w-[181px] border-r border-[#808080] flex items-center justify-center">
              <u>C</u>entro de Costo
            </div>
            <div className="w-[321px] border-r border-[#808080] flex items-center justify-center">
              <u>D</u>escripción
            </div>
            <div className="w-[186px] border-r border-[#808080] flex items-center justify-center">
              <u>I</u>mporte
            </div>
          </div>
          <div className="flex h-[24px] mt-[2px] gap-[3px]">
            <div className="w-[723px] flex bg-white border border-l-[#808080] border-t-[#a0a0a0] border-b-[#c0c0c0] border-r-white">
              <div className="w-[183px] bg-[#f0f0f0]" />
              <div className="w-[321px] border-r border-[#e2e2e2]" />
              <div className="w-[184px] flex items-center justify-end text-[16px]">0,00</div>
            </div>
            <div className="w-[14px] flex flex-col text-black">
              <div className="h-[12px] bg-[#f0f0f0] border-r border-b border-[#808080] flex items-center justify-center">
                <svg width="7" height="4" viewBox="0 0 7 4">
                  <path d="M3.5 0L7 4H0z" fill="#000" />
                </svg>
              </div>
              <div className="h-[12px] bg-[#f0f0f0] border-r border-b border-[#808080] flex items-center justify-center">
                <svg width="7" height="4" viewBox="0 0 7 4">
                  <path d="M0 0h7L3.5 4z" fill="#000" />
                </svg>
              </div>
            </div>
          </div>
        </div>
        <svg width="20" height="20" viewBox="0 0 20 20" fill="none" className="absolute left-[1290px] top-[98px]">
          <path d="M1 16l3 3M6 18V3c0-2 2-2 2 0v8V6c0-1 2-1 2 0v5V7c0-1 2-1 2 0v4V8c0-1 2-1 2 0v7" stroke="#111" strokeWidth="1.1" />
        </svg>
      </div>
      {/* estado */}
      <div className="h-[18px] flex font-['Liberation_Sans',sans-serif] text-[11px] text-[#111] border-t border-[#a0a0a0] items-stretch">
        <div className="flex-1 pl-[2px] flex items-center">Menú de edición</div>
        {[
          ["25/10/2021", "w-[60px]"],
          ["15:46", "w-[32px]"],
          ["NUM", "w-[31px]"],
          ["CAPS", "w-[35px]"],
          ["63", "w-[64px]"],
          ["5.9.379", "w-[66px]"],
        ].map(([t, w]) => (
          <div key={t} className={`${w} ml-[2px] border-l border-[#808080] flex items-center justify-center`}>
            {t}
          </div>
        ))}
        <div className="w-[18px]" />
      </div>
      <div className="flex-1 bg-[#202020]" />
    </div>
  );
}

function ContextMenu() {
  return (
    <div className="absolute left-[1459px] top-[583px] w-[247px] bg-[#f0f0f0] border border-[#a0a0a0] p-px shadow-[3px_3px_3px_rgba(0,0,0,0.35)] font-[Roboto,sans-serif] text-[12px] tracking-[-0.1px] text-[#222]">
      {menu.map((m, i) =>
        m === "-" ? (
          <div key={i} className="h-[7px] ml-[30px] mr-[1px] flex items-center">
            <div className="h-[2px] w-full bg-[#d8d8d8]" />
          </div>
        ) : (
          <div key={i} className={`h-[22px] flex items-center justify-between pl-[33px] pr-[19px] mx-[1px] ${m[2] === "on" ? "bg-[#90c8f6]" : ""} ${m[2] === "off" ? "text-[#777]" : ""}`}>
            <span>{m[0]}</span>
            <span>{m[1]}</span>
          </div>
        )
      )}
    </div>
  );
}

const App = () => {
  return (
    <div className="relative w-[3116px] h-[1081px] flex bg-white overflow-hidden">
      <div className="w-[1190px] shrink-0 h-[1081px] flex flex-col">
        <div className="flex border-r-2 border-[#8a8a8a]">
          <Excel />
        </div>
        <div className="h-px w-[325px] bg-[#e6e6e6]" />
      </div>
      <ContaNet />
      <ContextMenu />
    </div>
  );
};

export default App;
